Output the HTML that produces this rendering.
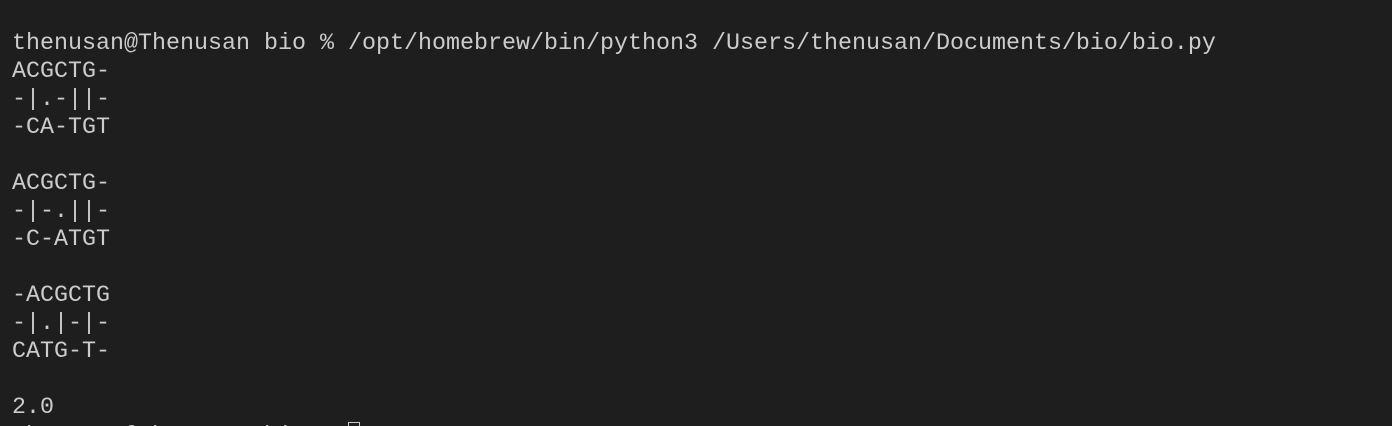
<!DOCTYPE html>
<html><head><meta charset="utf-8"><style>
html,body{margin:0;padding:0;background:#1e1e1e;width:1392px;height:426px;overflow:hidden}
#w{position:relative;width:1392px;height:426px;overflow:hidden;background:#1e1e1e}
pre{margin:0;position:absolute;left:12px;top:30px;font-family:"Liberation Mono",monospace;font-size:23.33px;line-height:28px;color:#cccccc}
.cur{display:inline-block;width:12px;height:24px;border:1px solid #ccc;box-sizing:border-box;vertical-align:-4px}
</style></head><body><div id="w"><pre>thenusan@Thenusan bio % /opt/homebrew/bin/python3 /Users/thenusan/Documents/bio/bio.py
ACGCTG-
-|.-||-
-CA-TGT

ACGCTG-
-|-.||-
-C-ATGT

-ACGCTG
-|.|-|-
CATG-T-

2.0
thenusan@Thenusan bio % <span class="cur"></span></pre></div></body></html>
